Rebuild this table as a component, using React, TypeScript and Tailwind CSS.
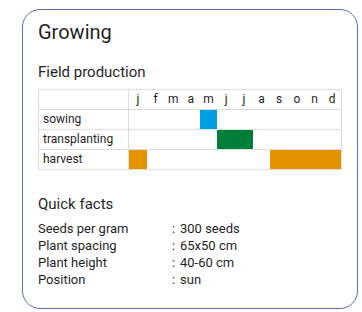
import { FC } from "react";

interface Season {
  label: string;
  months: number[];
  color: string;
}

const monthLetters = ["j", "f", "m", "a", "m", "j", "j", "a", "s", "o", "n", "d"];

const seasons: Season[] = [
  { label: "sowing", months: [4], color: "bg-[#009fe3]" },
  { label: "transplanting", months: [5, 6], color: "bg-[#007f3a]" },
  { label: "harvest", months: [0, 8, 9, 10, 11], color: "bg-[#e39300]" },
];

const facts = [
  { name: "Seeds per gram", value: "300 seeds" },
  { name: "Plant spacing", value: "65x50 cm" },
  { name: "Plant height", value: "40-60 cm" },
  { name: "Position", value: "sun" },
];

const App: FC = () => {
  return (
    <div className="w-[362px] h-[312px] bg-white pt-[9px] pl-[22px] font-['Roboto',sans-serif] text-[#1f1f1f]">
      <div className="w-[336px] h-[300px] rounded-[18px] border border-[#5b6eb4] pt-[10px] px-[15px]">
        <h2 className="text-[20px] leading-[24px]">Growing</h2>

        <h3 className="mt-[18px] text-[15px] leading-[20px]">Field production</h3>

        <div className="mt-[7px] w-[304px] border border-[#dddddd] text-[12px]">
          <div className="flex h-[19px]">
            <div className="w-[90px] border-r border-[#dddddd]" />
            <div className="grid w-[212px] grid-cols-12">
              {monthLetters.map((m, i) => (
                <span key={i} className="text-center leading-[19px]">
                  {m}
                </span>
              ))}
            </div>
          </div>
          {seasons.map((s) => (
            <div key={s.label} className="flex h-[20px] border-t border-[#dddddd]">
              <div className="w-[90px] border-r border-[#dddddd] pl-[4px] leading-[19px]">
                {s.label}
              </div>
              <div className="grid w-[212px] grid-cols-12">
                {monthLetters.map((_, i) => (
                  <span key={i} className={s.months.includes(i) ? s.color : ""} />
                ))}
              </div>
            </div>
          ))}
        </div>

        <h3 className="mt-[24px] text-[15px] leading-[20px]">Quick facts</h3>

        <div className="mt-[6px] text-[13px] leading-[17px]">
          {facts.map((f) => (
            <div key={f.name} className="flex">
              <span className="w-[134px]">{f.name}</span>
              <span className="w-[8px]">:</span>
              <span>{f.value}</span>
            </div>
          ))}
        </div>
      </div>
    </div>
  );
};

export default App;
